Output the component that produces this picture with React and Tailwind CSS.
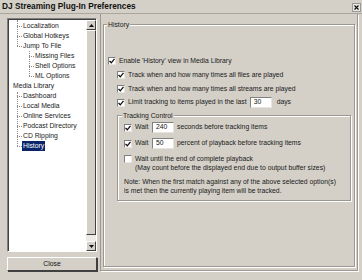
import React from 'react';

const F = { fontFamily: '"Liberation Sans", Arial, sans-serif' };

function Check({ on }) {
  return (
    <span className="w-[8px] h-[8px] shrink-0 bg-white border-t border-l border-t-[#808080] border-l-[#808080] border-b border-r border-b-[#e8e6e1] border-r-[#e8e6e1] flex items-center justify-center">
      {on && (
        <svg width="6" height="6" viewBox="0 0 6 6">
          <path d="M0.5 3 L2.3 4.8 L5.5 0.8" fill="none" stroke="#111" strokeWidth="1.3" />
        </svg>
      )}
    </span>
  );
}

function Field({ value }) {
  return (
    <span className="w-[22px] h-[11px] shrink-0 bg-white border-t border-l border-[#808080] border-b-[#e6e4df] border-r-[#e6e4df] border-b border-r flex items-center pl-[3px] text-[#111]">
      {value}
    </span>
  );
}

function Row({ level, label, selected }) {
  const pad = level === 0 ? 'pl-[3px]' : level === 1 ? 'pl-[8px]' : 'pl-[20px]';
  return (
    <div className={`flex items-center h-[10px] ${pad}`}>
      {level > 0 && <span className="w-[5px] border-t border-dotted border-[#8a8a8a]" />}
      <span className={selected ? 'bg-[#0a246a] text-white px-[1px] leading-[10px]' : 'ml-[1px] leading-[10px]'}>{label}</span>
    </div>
  );
}

export default function App() {
  return (
    <div style={F} className="w-[362px] h-[280px] bg-[#d4d0c8] text-[6.8px] text-[#1a1a1a] overflow-hidden whitespace-nowrap">
      {/* Title */}
      <div className="h-[14px] flex items-start justify-between border-b border-[#aaa69e] pl-[2px]">
        <span className="text-[8.3px] font-bold leading-[13px] text-[#111]">DJ Streaming Plug-In Preferences</span>
        <span className="w-[9px] h-[9px] mt-[3px] mr-[1px] bg-[#e8e6e2] border border-[#999] flex items-center justify-center">
          <svg width="5" height="5" viewBox="0 0 5 5">
            <path d="M0.5 0.5 L4.5 4.5 M4.5 0.5 L0.5 4.5" stroke="#111" strokeWidth="1.2" />
          </svg>
        </span>
      </div>

      <div className="flex">
        {/* Left column */}
        <div className="w-[90px] ml-[7px] mt-[4px] flex flex-col">
          <div className="h-[234px] flex border border-[#808080] border-r-white border-b-white">
            <div className="flex-1 bg-white border border-[#404040] border-r-0 border-b-0 pt-[1px] relative overflow-hidden">
              <span className="absolute left-[8px] top-0 h-[26px] border-l border-dotted border-[#8a8a8a]" />
              <span className="absolute left-[20px] top-[31px] h-[25px] border-l border-dotted border-[#8a8a8a]" />
              <span className="absolute left-[8px] top-[72px] h-[54px] border-l border-dotted border-[#8a8a8a]" />
              <Row level={1} label="Localization" />
              <Row level={1} label="Global Hotkeys" />
              <Row level={1} label="Jump To File" />
              <Row level={2} label="Missing Files" />
              <Row level={2} label="Shell Options" />
              <Row level={2} label="ML Options" />
              <Row level={0} label="Media Library" />
              <Row level={1} label="Dashboard" />
              <Row level={1} label="Local Media" />
              <Row level={1} label="Online Services" />
              <Row level={1} label="Podcast Directory" />
              <Row level={1} label="CD Ripping" />
              <Row level={1} label="History" selected />
            </div>
            <div className="w-[10px] flex flex-col bg-[#d4d0c8] border-t border-[#404040]">
              <span className="h-[10px] border border-white border-r-[#404040] border-b-[#404040] flex items-center justify-center">
                <svg width="5" height="3" viewBox="0 0 5 3"><path d="M2.5 0 L5 3 L0 3 Z" fill="#111" /></svg>
              </span>
              <span className="flex-1 border border-white border-r-[#404040] border-b-[#404040]" />
              <span className="h-[6px] bg-[#ecebe7]" />
              <span className="h-[10px] border border-white border-r-[#404040] border-b-[#404040] flex items-center justify-center">
                <svg width="5" height="3" viewBox="0 0 5 3"><path d="M0 0 L5 0 L2.5 3 Z" fill="#111" /></svg>
              </span>
            </div>
          </div>
          <button className="mt-[5px] h-[14px] border border-white border-r-[#404040] border-b-[#404040] shadow-[1px_1px_0_#404040] text-center leading-[12px] text-[#111]">
            Close
          </button>
        </div>

        {/* Right pane */}
        <div className="ml-[3px] w-[258px] h-[257px] border border-t-0 border-[#9c9890] shadow-[1px_1px_0_#fff] pl-[2px] pr-[2px] pt-[10px]">
          <div className="relative h-[243px] border border-[#9c9890] shadow-[inset_1px_1px_0_#fff,1px_1px_0_#fff] pl-[4px] pr-[3px]">
            <span className="absolute -top-[5px] left-[3px] px-[1px] bg-[#d4d0c8] leading-[9px]">History</span>

            <div className="mt-[31px] h-[10px] flex items-center gap-[3px]">
              <Check on />
              <span>Enable 'History' view in Media Library</span>
            </div>
            <div className="mt-[4px] h-[10px] flex items-center gap-[3px] pl-[9px]">
              <Check on />
              <span>Track when and how many times all files are played</span>
            </div>
            <div className="mt-[4px] h-[10px] flex items-center gap-[3px] pl-[9px]">
              <Check on />
              <span>Track when and how many times all streams are played</span>
            </div>
            <div className="mt-[3px] h-[11px] flex items-center gap-[3px] pl-[9px]">
              <Check on />
              <span>Limit tracking to items played in the last</span>
              <Field value="30" />
              <span className="ml-[2px]">days</span>
            </div>

            {/* Tracking Control */}
            <div className="relative mt-[7px] ml-[9px] h-[86px] border border-[#9c9890] shadow-[inset_1px_1px_0_#fff,1px_1px_0_#fff] pl-[6px]">
              <span className="absolute -top-[5px] left-[4px] px-[1px] bg-[#d4d0c8] leading-[9px]">Tracking Control</span>
              <div className="mt-[6px] h-[11px] flex items-center gap-[3px]">
                <Check on />
                <span className="w-[14px]">Wait</span>
                <Field value="240" />
                <span>seconds before tracking items</span>
              </div>
              <div className="mt-[5px] h-[11px] flex items-center gap-[3px]">
                <Check on />
                <span className="w-[14px]">Wait</span>
                <Field value="50" />
                <span>percent of playback before tracking items</span>
              </div>
              <div className="mt-[5px] flex items-start gap-[3px] leading-[9px]">
                <span className="mt-[1px]"><Check /></span>
                <div>
                  <div>Wait until the end of complete playback</div>
                  <div>(May count before the displayed end due to output buffer sizes)</div>
                </div>
              </div>
              <div className="mt-[5px] leading-[9px]">
                <div>Note: When the first match against any of the above selected option(s)</div>
                <div>is met then the currently playing item will be tracked.</div>
              </div>
            </div>
          </div>
        </div>
      </div>
    </div>
  );
}
